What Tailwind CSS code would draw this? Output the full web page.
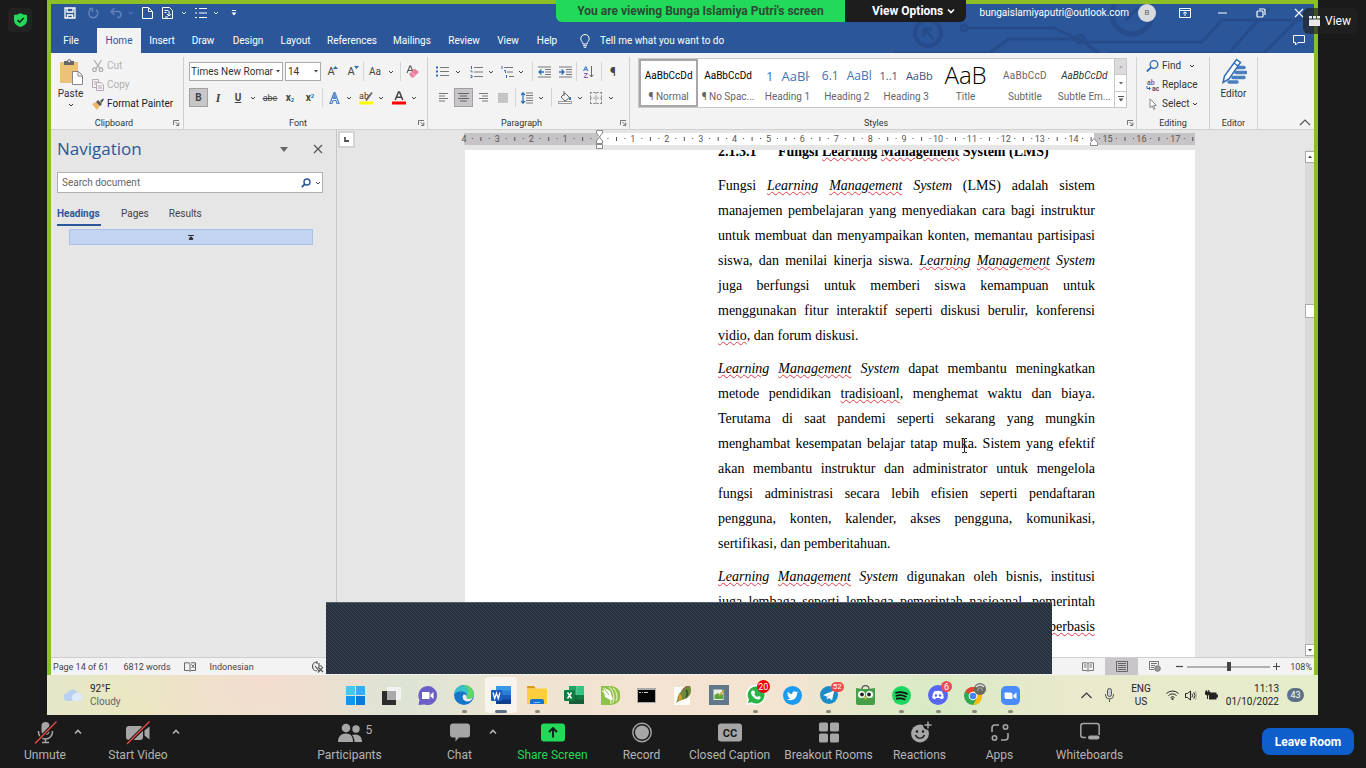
<!DOCTYPE html>
<html lang="en">
<head>
<meta charset="utf-8">
<title>Zoom Meeting</title>
<script src="https://cdn.jsdelivr.net/npm/@tailwindcss/browser@4"></script>
</head>
<body class="flex h-screen flex-col overflow-hidden bg-[#1a1a1a] font-['Roboto',sans-serif] text-[10px] leading-3 text-[#444]">

<svg class="hidden">
  <symbol id="chev" viewBox="0 0 6 6"><path d="M1 2l2 2 2-2" fill="none" stroke="currentColor" stroke-width="1"/></symbol>
  <symbol id="tri" viewBox="0 0 6 6"><path d="M1 2h4L3 4.500z" fill="currentColor"/></symbol>
  <symbol id="up" viewBox="0 0 8 8"><path d="M1 5.500l3-3 3 3" fill="none" stroke="currentColor" stroke-width="1.600"/></symbol>
  <symbol id="launch" viewBox="0 0 7 6"><path d="M.5 5V.5H6M2.500 2l3 3M5.800 2.500v3H3" fill="none" stroke="#666" stroke-width=".9"/></symbol>
</svg>

<!-- shared screen with gutters -->
<div class="relative flex min-h-0 flex-1">
  <div class="w-[47px] shrink-0 pt-2 pl-2">
    <button aria-label="Encryption" class="flex size-6 items-center justify-center rounded bg-[#222]">
      <svg class="h-[14px] w-[13px]" viewBox="0 0 13 14"><path d="M6.500 0C8 1.300 10.500 2 13 2v5c0 3.500-3 6-6.500 7C3 13 0 10.500 0 7V2c2.500 0 5-.7 6.500-2z" fill="#23d959"/><path d="M3.500 7l2.200 2.200L9.700 5" fill="none" stroke="#1a1a1a" stroke-width="1.600"/></svg>
    </button>
  </div>

  <main class="relative flex min-w-0 flex-1 flex-col">
    <!-- Word window -->
    <div class="flex min-h-0 flex-1 flex-col border-x-4 border-t-4 border-[#8cbf26] bg-[#e6e6e6]">
      <header class="relative shrink-0 bg-[#2b579a] text-white">
        <svg class="absolute top-0 right-0 h-[49px] w-[420px]" viewBox="0 0 420 49" fill="none" stroke="#264c8b" stroke-width="3"><circle cx="34" cy="29" r="13" stroke-width="4"/><path d="M40 35l-10-10m0 8v-8h8M0 49h95l20-14h70l20 14M70 24h90l30 14M73 24a3 3 0 1 0-6 0 3 3 0 0 0 6 0M190 38h118l20-22h92M215 49h120l40-45M260 49h110l45-45"/><circle cx="238" cy="10" r="20" stroke-width="5"/><circle cx="186" cy="35" r="4"/><path d="M232 16l12-12"/></svg>
        <div class="relative flex h-[24px] items-center justify-between pr-[10px] pb-[6px] pl-[13px]">
          <div class="flex items-center">
            <button aria-label="Save" class="w-[14px]"><svg class="size-3" viewBox="0 0 12 12" fill="none" stroke="#fff"><path d="M1 1h10v10H1zM3 1v4h6V1M3.500 11V8h5v3" stroke-width="1.300"/></svg></button>
            <button aria-label="Redo" class="ml-[9px] w-[13px]"><svg class="size-3" viewBox="0 0 12 12" fill="none" stroke="#5f82bc" stroke-width="1.500"><path d="M4 2.300A4.500 4.500 0 1 0 9 2.600M2 1.500h3.500V5"/></svg></button>
            <button aria-label="Undo" class="ml-[10px] w-[13px]"><svg class="size-3" viewBox="0 0 12 12" fill="none" stroke="#5f82bc" stroke-width="1.500"><path d="M1 4.500h7a3 3 0 0 1 0 6H7M4.500 1L1 4.500 4.500 8"/></svg></button>
            <svg class="ml-[5px] size-[6px] text-[#5f82bc]"><use href="#chev"/></svg>
            <button aria-label="New" class="ml-[8px] w-[13px]"><svg class="h-3 w-[11px]" viewBox="0 0 11 12" fill="none" stroke="#fff"><path d="M.5.5h6l4 4v7H.5zM6.500.5v4h4"/></svg></button>
            <button aria-label="Document" class="ml-[7px] w-[13px]"><svg class="h-3 w-[12px]" viewBox="0 0 12 12" fill="none" stroke="#fff"><path d="M.5.5h7l3 3v8H.5zM2.500 3.500h4M2.500 5.500h2M7 4v5M5 7l2 2 2-2M3 10h3"/></svg></button>
            <svg class="ml-[6px] size-[6px]"><use href="#chev"/></svg>
            <button aria-label="List" class="ml-[8px] w-[14px]"><svg class="size-3" viewBox="0 0 12 12" stroke="#fff"><path d="M0 1.500h2M0 6h2M0 10.500h2M4 1.500h8M4 6h8M4 10.500h8"/></svg></button>
            <svg class="ml-[4px] size-[6px]"><use href="#chev"/></svg>
            <svg class="ml-[12px] size-[6px]" viewBox="0 0 6 6"><path d="M1 .5h4" stroke="#fff"/><path d="M.5 2.500h5L3 5.500z" fill="#fff"/></svg>
          </div>
          <div class="flex items-center">
            <span>bungaislamiyaputri@outlook.com</span>
            <span class="ml-[9px] flex size-[18px] items-center justify-center rounded-full bg-[#d9dbe0] text-[8px] text-[#666]">B</span>
            <button aria-label="Ribbon display options" class="ml-[23px]"><svg class="h-[10px] w-3" viewBox="0 0 12 10" fill="none" stroke="#fff"><path d="M.5.5h11v9H.5zM.5 2.500h11M6 8V4M4 5.700L6 3.800l2 1.900"/></svg></button>
            <button aria-label="Minimize" class="ml-[27px]"><svg class="h-[10px] w-[9px]" viewBox="0 0 9 10"><path d="M0 5h9" stroke="#fff"/></svg></button>
            <button aria-label="Restore" class="ml-[29px]"><svg class="size-[10px]" viewBox="0 0 10 10" fill="none" stroke="#fff" stroke-width="1.200"><rect x="1" y="3" width="6" height="6" rx="1"/><path d="M3 1h5q1 0 1 1v5"/></svg></button>
            <button aria-label="Close" class="ml-[28px]"><svg class="size-[10px]" viewBox="0 0 10 10"><path d="M1 1l8 8M9 1L1 9" stroke="#fff" stroke-width="1.100"/></svg></button>
          </div>
        </div>
        <nav class="relative flex h-[25px] items-stretch">
          <button class="w-10 pt-px">File</button>
          <button class="ml-[6px] w-11 bg-[#f3f3f3] pt-px text-[#2b579a]">Home</button>
          <button class="w-[42px] pt-px">Insert</button>
          <button class="w-10 pt-px">Draw</button>
          <button class="w-[50px] pt-px">Design</button>
          <button class="w-[45px] pt-px">Layout</button>
          <button class="w-[68px] pt-px">References</button>
          <button class="w-[52px] pt-px">Mailings</button>
          <button class="w-[52px] pt-px">Review</button>
          <button class="w-9 pt-px">View</button>
          <button class="w-[42px] pt-px">Help</button>
          <button class="ml-[12px] flex items-center gap-[10px] pt-px"><svg class="h-[14px] w-[10px]" viewBox="0 0 10 14" fill="none" stroke="#fff"><path d="M3 10C3 8 .8 7.200.8 4.700a4.200 4.200 0 0 1 8.400 0C9.200 7.200 7 8 7 10zM3 11.700h4M3.800 13.300h2.400"/></svg>Tell me what you want to do</button>
          <button aria-label="Comments" class="mr-[9px] ml-auto"><svg class="h-[11px] w-3" viewBox="0 0 12 11" fill="none" stroke="#fff"><path d="M.5.5h11v7H5l-2.500 2.500V7.500h-2z"/></svg></button>
        </nav>
      </header>

      <!-- ribbon -->
      <section class="flex h-[77px] shrink-0 border-b border-[#d0d0d0] bg-[#f3f3f3] pt-1">
        <div class="flex w-[133px] flex-col border-r border-[#cfcfcf]">
          <div class="flex flex-1">
            <button class="flex w-[39px] flex-col items-center pt-[2px] text-[#333]"><svg class="h-[26px] w-6" viewBox="0 0 24 26"><path d="M1 3h18v21H1z" fill="#ecc278"/><path d="M5 2h3a2.300 2.300 0 0 1 4.500 0H15v4H5z" fill="#666"/><circle cx="10.200" cy="2.300" r="1" fill="#f3f3f3"/><path d="M13.500 12.500h6l4 4v9h-10zM19 12.500v4.500h4.500" fill="#fff" stroke="#888"/></svg><span class="mt-[3px]">Paste</span><svg class="mt-[2px] size-[6px]"><use href="#chev"/></svg></button>
            <div class="-mt-px flex flex-col pl-[2px]">
              <button class="flex h-[19px] items-center gap-[3px] text-[#b0b0b0]"><svg class="size-3" viewBox="0 0 12 12" fill="none" stroke="#aaa" stroke-width="1.200"><path d="M2 0l6 8.500M9.500 0L4 8.500"/><circle cx="2.500" cy="9.700" r="1.800"/><circle cx="9" cy="9.700" r="1.800"/></svg>Cut</button>
              <button class="flex h-[19px] items-center gap-[3px] text-[#b0b0b0]"><svg class="size-3" viewBox="0 0 12 12" fill="#f3f3f3" stroke="#b5a9b5"><path d="M.5.5h6v8h-6zM2 3h3M2 5h3"/><path d="M4.500 3.500H9l2.500 2.500v5.500h-7zM6 7h4M6 9h4"/></svg>Copy</button>
              <button class="flex h-[19px] items-center gap-[3px] text-[#222]"><svg class="size-3" viewBox="0 0 12 12"><path d="M0 6l4-2 4 4-3 4z" fill="#ecb56a"/><path d="M4 4l2-2 4 4-2 2z" fill="#555"/><path d="M8 3l3-2.500 1 1L9.500 5z" fill="#555"/></svg>Format Painter</button>
            </div>
          </div>
          <div class="flex h-3 items-center pr-[3px] text-[9px] text-[#333]"><span class="flex-1 pl-[4px] text-center">Clipboard</span><svg class="h-[6px] w-[7px]"><use href="#launch"/></svg></div>
        </div>

        <div class="flex w-[244px] flex-col border-r border-[#cfcfcf]">
          <div class="flex flex-1 flex-col gap-[7px] pt-[5px] pl-[5px]">
            <div class="flex h-[19px] items-center">
              <div class="relative h-[19px] w-[94px]"><select aria-label="Font" class="h-full w-full appearance-none border border-[#ababab] bg-white pl-[1px] text-[10px] text-[#333]"><option>Times New Romar</option></select><svg class="absolute top-[6px] right-[2px] size-[6px]"><use href="#tri"/></svg></div>
              <div class="relative ml-[2px] h-[19px] w-[36px]"><select aria-label="Font size" class="h-full w-full appearance-none border border-[#ababab] bg-white pl-[2px] text-[10px] text-[#333]"><option>14</option></select><svg class="absolute top-[6px] right-[2px] size-[6px]"><use href="#tri"/></svg></div>
              <button class="relative w-5 text-[11px]">A<svg class="absolute top-0 right-[3px] h-[3px] w-[5px]" viewBox="0 0 5 3"><path d="M0 3l2.500-3L5 3z" fill="#2b6cb5"/></svg></button>
              <button class="relative w-5 text-[11px]">A<svg class="absolute top-0 right-[2px] h-[3px] w-[5px]" viewBox="0 0 5 3"><path d="M0 0l2.500 3L5 0z" fill="#2b6cb5"/></svg></button>
              <i class="ml-[2px] h-full w-px bg-[#d5d5d5]"></i>
              <button class="ml-[5px] flex w-[25px] items-center justify-between">Aa<svg class="size-[6px]"><use href="#chev"/></svg></button>
              <i class="ml-[6px] h-full w-px bg-[#d5d5d5]"></i>
              <button aria-label="Clear formatting" class="ml-[5px]"><svg class="h-[13px] w-[14px]" viewBox="0 0 14 13"><path d="M1 8L3.800 1h.8L7 7M2 5.500h4" fill="none" stroke="#555" stroke-width="1.100"/><path d="M3 9l5.500-5.500L13 7l-5.500 5.500H5.500z" fill="#e8809a"/><path d="M5 7.200l4.500 3.800" stroke="#fbe" stroke-width=".8"/></svg></button>
            </div>
            <div class="flex h-[19px] items-center">
              <button class="size-[19px] border border-[#a0a0a0] bg-[#c8c6c8] font-bold">B</button>
              <button class="w-5 font-['Liberation_Serif',serif] text-[12px] font-bold italic">I</button>
              <button class="w-5 font-bold underline">U</button>
              <svg class="mx-[2px] size-[6px]"><use href="#chev"/></svg>
              <button class="w-6 text-[9px] line-through">abc</button>
              <button class="w-4 font-bold">x<sub class="text-[6px] text-[#2b6cb5]">2</sub></button>
              <button class="w-6 font-bold">x<sup class="text-[6px] text-[#2b6cb5]">2</sup></button>
              <i class="h-full w-px bg-[#d5d5d5]"></i>
              <button aria-label="Text effects" class="flex w-[22px] justify-center"><svg class="h-3 w-[11px]" viewBox="0 0 11 12"><path d="M1 11.500L5 .7h1l4 10.800H8L7 8.500H4L3 11.500zM4.500 6.500h2L5.500 3.500z" fill="#fff" stroke="#4f86c8" stroke-width="1.200"/></svg></button>
              <svg class="mx-px size-[6px]"><use href="#chev"/></svg>
              <button aria-label="Highlight" class="ml-[2px] flex w-[22px] justify-center"><svg class="h-[14px] w-[14px]" viewBox="0 0 14 14"><text x="0" y="8" font-size="9" font-family="Roboto" fill="#444">ab</text><path d="M13 1.500L7 9.500" stroke="#666" stroke-width="1.800"/><path d="M0 10.500h14v3H0z" fill="#ff0"/></svg></button>
              <svg class="mx-px size-[6px]"><use href="#chev"/></svg>
              <button aria-label="Font color" class="ml-[3px] flex w-[22px] justify-center"><svg class="h-[14px] w-[14px]" viewBox="0 0 14 14"><path d="M3.200 9L6.500 1h1L10.800 9M4.500 6.200h5" fill="none" stroke="#444" stroke-width="1.500"/><path d="M0 10.500h14v3H0z" fill="red"/></svg></button>
              <svg class="mx-px size-[6px]"><use href="#chev"/></svg>
            </div>
          </div>
          <div class="flex h-3 items-center pr-[2px] text-[9px] text-[#333]"><span class="flex-1 pr-[6px] text-center">Font</span><svg class="h-[6px] w-[7px]"><use href="#launch"/></svg></div>
        </div>

        <div class="flex w-[202px] flex-col border-r border-[#cfcfcf]">
          <div class="flex flex-1 flex-col gap-[7px] pt-[5px] pl-2">
            <div class="flex h-[19px] items-center">
              <button aria-label="Bullets" class="w-[15px]"><svg class="h-[11px] w-[13px]" viewBox="0 0 13 11"><path d="M0 1.500h2M0 5.500h2M0 9.500h2" stroke="#2b6cb5" stroke-width="2"/><path d="M4 1.500h9M4 5.500h9M4 9.500h9" stroke="#777"/></svg></button>
              <svg class="mr-[5px] ml-[4px] size-[6px]"><use href="#chev"/></svg>
              <button aria-label="Numbering" class="flex w-5 justify-center"><svg class="h-3 w-[13px]" viewBox="0 0 13 12"><path d="M1.500 0v3M.5 5h1.500v1.500M.5 9.500H2v2H.5" fill="none" stroke="#2b6cb5"/><path d="M4 1.500h9M4 6h9M4 10.500h9" stroke="#777"/></svg></button>
              <svg class="mx-[2px] size-[6px]"><use href="#chev"/></svg>
              <button aria-label="Multilevel list" class="flex w-[22px] justify-center"><svg class="h-3 w-[13px]" viewBox="0 0 13 12"><path d="M1 0v3M3 4.500h1.500V7M5.500 9v3" fill="none" stroke="#2b6cb5"/><path d="M3 1.500h9M6 6h6M8 10.500h5" stroke="#777"/></svg></button>
              <svg class="size-[6px]"><use href="#chev"/></svg>
              <i class="ml-[8px] h-full w-px bg-[#d5d5d5]"></i>
              <button aria-label="Decrease indent" class="flex w-[22px] justify-center"><svg class="h-3 w-[13px]" viewBox="0 0 13 12"><path d="M0 1h13M7 3.500h6M7 6h6M7 8.500h6M0 11h13" stroke="#777"/><path d="M1 6h5M3.500 3.500L1 6l2.500 2.500" fill="none" stroke="#2b6cb5" stroke-width="1.300"/></svg></button>
              <button aria-label="Increase indent" class="flex w-5 justify-center"><svg class="h-3 w-[13px]" viewBox="0 0 13 12"><path d="M0 1h13M7 3.500h6M7 6h6M7 8.500h6M0 11h13" stroke="#777"/><path d="M0 6h5M2.500 3.500L5 6 2.500 8.500" fill="none" stroke="#2b6cb5" stroke-width="1.300"/></svg></button>
              <i class="ml-px h-full w-px bg-[#d5d5d5]"></i>
              <button aria-label="Sort" class="flex w-6 justify-center"><svg class="h-3 w-3" viewBox="0 0 12 12" fill="none"><path d="M.5 5L2.700.5 5 5M1.300 3.700H4" stroke="#2b6cb5"/><path d="M1 7.500h3.500L1 11.500h4" stroke="#8e5bb5"/><path d="M8.500 0v11M6.500 8.800l2 2.200 2-2.200" stroke="#666"/></svg></button>
              <i class="h-full w-px bg-[#d5d5d5]"></i>
              <button class="w-[22px] text-[12px]">¶</button>
            </div>
            <div class="flex h-[19px] items-center">
              <button aria-label="Align left" class="flex w-[15px] justify-center"><svg class="h-[9px] w-[9px]" viewBox="0 0 9 9"><path d="M0 .5h9M0 3h6M0 5.500h9M0 8h6" stroke="#777"/></svg></button>
              <button aria-label="Center" class="ml-[3px] flex size-[19px] items-center justify-center border border-[#a0a0a0] bg-[#c8c6c8]"><svg class="h-[9px] w-[11px]" viewBox="0 0 11 9"><path d="M0 .5h11M2 3h7M0 5.500h11M2 8h7" stroke="#666"/></svg></button>
              <button aria-label="Align right" class="flex w-5 justify-center"><svg class="h-[9px] w-[9px]" viewBox="0 0 9 9"><path d="M0 .5h9M3 3h6M0 5.500h9M3 8h6" stroke="#777"/></svg></button>
              <button aria-label="Justify" class="flex w-5 justify-center"><svg class="h-[10px] w-[10px]" viewBox="0 0 10 10"><path d="M0 0h10v10H0z" fill="#ccc"/><path d="M0 .5h10M0 3h10M0 5.500h10M0 8h10" stroke="#bbb"/></svg></button>
              <i class="ml-[2px] h-full w-px bg-[#d5d5d5]"></i>
              <button aria-label="Line spacing" class="flex w-[22px] justify-center"><svg class="h-3 w-[12px]" viewBox="0 0 12 12"><path d="M5 1h7M5 3.500h7M5 6h7M5 8.500h7M5 11h7" stroke="#777"/><path d="M2 .8v10.400M0 3L2 .8 4 3M0 9l2 2.200L4 9" fill="none" stroke="#2b6cb5" stroke-width="1.200"/></svg></button>
              <svg class="size-[6px]"><use href="#chev"/></svg>
              <i class="ml-[7px] h-full w-px bg-[#d5d5d5]"></i>
              <button aria-label="Shading" class="ml-px flex w-[23px] justify-center"><svg class="h-[13px] w-[14px]" viewBox="0 0 14 13" fill="none"><path d="M7 2l4.500 4.500L7 10 3 6zM6 0v5" stroke="#666"/><path d="M12 6v3" stroke="#2b6cb5" stroke-width="1.800"/><path d="M.5 10.500h13v2H.5z" fill="#fff" stroke="#999"/></svg></button>
              <svg class="mx-px size-[6px]"><use href="#chev"/></svg>
              <button aria-label="Borders" class="ml-px flex w-[22px] justify-center"><svg class="size-[12px]" viewBox="0 0 12 12"><path d="M.5 0v12M11.500 0v12M0 .5h12M0 11.500h12M6 0v12M0 6h12" stroke="#888" stroke-dasharray="2 1.300"/></svg></button>
              <svg class="mx-px size-[6px]"><use href="#chev"/></svg>
            </div>
          </div>
          <div class="flex h-3 items-center pr-[2px] text-[9px] text-[#333]"><span class="flex-1 pr-[5px] text-center">Paragraph</span><svg class="h-[6px] w-[7px]"><use href="#launch"/></svg></div>
        </div>

        <div class="flex min-w-0 flex-1 flex-col border-r border-[#d5d5d5]">
          <div class="flex flex-1 pt-px pr-[9px] pl-2">
            <div class="flex h-[50px] min-w-0 flex-1 border border-[#c8c8c8] bg-white font-['Open_Sans',sans-serif] text-[#666]">
              <div class="grid min-w-0 flex-1 grid-cols-8">
                <button class="flex min-w-0 flex-col items-center justify-between border-2 border-[#a8a6a8] pt-[9px] pb-[2px] whitespace-nowrap font-['Roboto',sans-serif]"><span class="text-black">AaBbCcDd</span><span>¶ Normal</span></button>
                <button class="flex min-w-0 flex-col items-center justify-between pt-[11px] pb-[4px] whitespace-nowrap font-['Roboto',sans-serif]"><span class="text-black">AaBbCcDd</span><span>¶ No Spac...</span></button>
                <button class="flex min-w-0 flex-col items-center justify-between pt-[11px] pb-[4px] whitespace-nowrap"><span class="flex gap-2 text-[13px] text-[#4472b4]"><span>1</span><span>AaBŀ</span></span><span class="font-['Roboto',sans-serif]">Heading 1</span></button>
                <button class="flex min-w-0 flex-col items-center justify-between pt-[11px] pb-[4px] whitespace-nowrap"><span class="flex gap-2 text-[12px] text-[#4472b4]"><span>6.1</span><span>AaBl</span></span><span class="font-['Roboto',sans-serif]">Heading 2</span></button>
                <button class="flex min-w-0 flex-col items-center justify-between pt-[11px] pb-[4px] whitespace-nowrap"><span class="flex gap-2 text-[11px] text-[#3a5480]"><span>1..1</span><span>AaBb</span></span><span class="font-['Roboto',sans-serif]">Heading 3</span></button>
                <button class="flex min-w-0 flex-col items-center justify-between pb-[4px] whitespace-nowrap"><span class="text-[24px] leading-8 font-light text-black">AaB</span><span class="font-['Roboto',sans-serif]">Title</span></button>
                <button class="flex min-w-0 flex-col items-center justify-between pt-[11px] pb-[4px] whitespace-nowrap font-['Roboto',sans-serif]"><span class="tracking-wide">AaBbCcD</span><span>Subtitle</span></button>
                <button class="flex min-w-0 flex-col items-center justify-between pt-[11px] pb-[4px] whitespace-nowrap font-['Roboto',sans-serif]"><span class="text-[#333] italic">AaBbCcDd</span><span>Subtle Em...</span></button>
              </div>
              <div class="flex w-3 shrink-0 flex-col border-l border-[#c8c8c8]">
                <button aria-label="Previous styles" class="flex flex-1 items-center justify-center bg-[#dcdadc] text-[#aaa]"><svg class="size-[6px] rotate-180"><use href="#tri"/></svg></button>
                <button aria-label="Next styles" class="flex flex-1 items-center justify-center border-y border-[#c8c8c8]"><svg class="size-[6px]"><use href="#tri"/></svg></button>
                <button aria-label="More styles" class="flex flex-1 items-center justify-center"><svg class="size-[6px]" viewBox="0 0 6 6"><path d="M0 .5h6" stroke="#555"/><path d="M.5 2.500h5L3 5.500z" fill="#555"/></svg></button>
              </div>
            </div>
          </div>
          <div class="flex h-3 items-center pr-[2px] text-[9px] text-[#333]"><span class="flex-1 pr-[5px] text-center">Styles</span><svg class="h-[6px] w-[7px]"><use href="#launch"/></svg></div>
        </div>

        <div class="flex w-[73px] flex-col border-r border-[#cfcfcf] text-[#333]">
          <div class="-mt-px flex flex-1 flex-col pl-[9px]">
            <button class="flex h-[19px] items-center"><svg class="h-3 w-[13px]" viewBox="0 0 13 12" fill="none" stroke="#2b6cb5"><circle cx="8" cy="4.500" r="3.800" stroke-width="1.300"/><path d="M5.200 7.300L.8 11.500" stroke-width="1.800"/></svg><span class="ml-[3px] w-[19px]">Find</span><svg class="ml-[8px] size-[6px]"><use href="#chev"/></svg></button>
            <button class="flex h-[19px] items-center"><svg class="h-3 w-[13px]" viewBox="0 0 13 12"><text x="1" y="5.500" font-size="7" font-weight="700" font-family="Roboto" fill="#666">a<tspan fill="#8e5bb5">b</tspan></text><text x="6" y="11.500" font-size="7" font-weight="700" font-family="Roboto" fill="#555">ac</text><path d="M1 7v2.500h3M3 8l1.500 1.500L3 11" fill="none" stroke="#2b6cb5"/></svg><span class="ml-[3px]">Replace</span></button>
            <button class="flex h-[19px] items-center"><svg class="h-3 w-[13px]" viewBox="0 0 13 12"><path d="M4 .8v9l2.200-2 1.500 3.500 1.300-.6-1.500-3.300h2.800z" fill="#fff" stroke="#888"/></svg><span class="ml-[3px]">Select</span><svg class="ml-[3px] size-[6px]"><use href="#chev"/></svg></button>
          </div>
          <div class="flex h-3 items-center justify-center text-[9px]">Editing</div>
        </div>
        <div class="flex w-[48px] flex-col items-center border-r border-[#d5d5d5] text-[#333]">
          <button class="flex flex-1 flex-col items-center pt-px"><svg class="h-[26px] w-[26px]" viewBox="0 0 26 26"><path d="M14 9.500h9M15 14.500h10M12 19.500h11M8 24h8" stroke="#4a80c0" stroke-width="3.500" stroke-linecap="round"/><path d="M15.500 1.500l4 3L8 21l-6 3.500L3.500 18z" fill="#fff" stroke="#2f6db8" stroke-width="1.500"/><path d="M13 5l4 3" stroke="#2f6db8" stroke-width="1.500"/></svg><span class="mt-[4px]">Editor</span></button>
          <div class="flex h-3 items-center justify-center text-[9px]">Editor</div>
        </div>
        <div class="flex w-[56px] items-end justify-end pr-[3px] pb-[3px]"><button aria-label="Collapse ribbon"><svg class="h-[7px] w-3" viewBox="0 0 12 7"><path d="M1 6l5-5 5 5" fill="none" stroke="#555" stroke-width="1.200"/></svg></button></div>
      </section>

      <!-- navigation pane and document -->
      <div class="flex min-h-0 flex-1">
        <aside class="w-[286px] shrink-0 border-r border-[#c6c6c6] pl-[6px]">
          <div class="flex h-[38px] items-center pr-[13px]"><h2 class="flex-1 font-['Open_Sans',sans-serif] text-[17px] leading-6 text-[#2b579a]">Navigation</h2><svg class="mr-[25px] h-[5px] w-2" viewBox="0 0 8 5"><path d="M0 0h8L4 5z" fill="#666"/></svg><button aria-label="Close navigation"><svg class="size-[10px]" viewBox="0 0 10 10"><path d="M1 1l8 8M9 1L1 9" stroke="#555" stroke-width="1.200"/></svg></button></div>
          <div class="mt-[4px] mr-[13px] flex h-[21px] items-center border border-[#b0b0b0] bg-white pr-px"><input aria-label="Search document" placeholder="Search document" class="min-w-0 flex-1 pl-[4px] text-[10px] outline-none placeholder:text-[#666]"><svg class="h-[10px] w-[10px]" viewBox="0 0 10 10" fill="none" stroke="#2b579a"><circle cx="6" cy="4" r="3" stroke-width="1.400"/><path d="M4 6L.8 9.200" stroke-width="1.800"/></svg><svg class="ml-[4px] size-[6px]"><use href="#chev"/></svg></div>
          <div class="mt-[11px] flex"><button class="h-[22px] w-11 border-b-2 border-[#2b579a] text-left font-bold text-[#2b579a]">Headings</button><button class="ml-[20px] h-[22px] pb-[2px]">Pages</button><button class="ml-[20px] h-[22px] pb-[2px]">Results</button></div>
          <div class="mt-[3px] mr-[23px] ml-[12px] flex h-[16px] items-center justify-center border border-[#a9c0ea] bg-[#c3d3f2]"><svg class="h-[5px] w-[6px]" viewBox="0 0 6 5"><path d="M0 .5h6M1 4.500h4" stroke="#333"/><path d="M3 1l2.500 3h-5z" fill="#333"/></svg></div>
        </aside>

        <section class="flex min-w-0 flex-1 flex-col">
          <div class="flex h-5 shrink-0 items-start">
            <button aria-label="Tab stop" class="mt-px ml-px flex size-[17px] items-center justify-center border-2 border-[#d4d4d4] bg-white"><svg class="size-[5px]" viewBox="0 0 5 5"><path d="M1 0v4h4" fill="none" stroke="#555" stroke-width="1.800"/></svg></button>
            <svg id="ruler" class="ml-[106px] h-[19px] w-[736px]" viewBox="0 0 736 19" font-family="Roboto" font-size="9" fill="#555" text-anchor="middle"><path d="M3 3h731v12H3z" fill="#c6c4c6"/><path d="M137 3h496v12H137z" fill="#fff"/></svg>
          </div>
          <div class="flex min-h-0 flex-1">
            <article class="ml-[128px] w-[730px] overflow-hidden bg-white pr-[100px] pl-[253px] font-['Liberation_Serif',serif] text-[14px] leading-[25px] text-black">
              <h3 class="-mt-[11px] mb-[9px] flex font-bold"><span class="w-[60px]">2.1.3.1</span><span></span></h3>
              <div id="text"></div>
            </article>
            <div class="ml-auto flex w-[9px] flex-col items-stretch overflow-hidden bg-[#dadada]">
              <button aria-label="Scroll up" class="mt-px flex h-3 items-center justify-center border border-r-0 border-[#aaa] bg-white"><svg class="size-[6px] rotate-180"><use href="#tri"/></svg></button>
              <div class="mt-[141px] h-[14px] border border-r-0 border-[#aaa] bg-white"></div>
              <button aria-label="Scroll down" class="mt-auto mb-px flex h-3 items-center justify-center border border-r-0 border-[#aaa] bg-white"><svg class="size-[6px]"><use href="#tri"/></svg></button>
            </div>
          </div>
        </section>
      </div>

      <footer class="flex h-[18px] shrink-0 items-center border-t border-[#cfcfcf] bg-[#f3f3f3] pl-[2px] text-[9px]">
        <span>Page 14 of 61</span><span class="ml-[15px]">6812 words</span>
        <svg class="ml-[13px] h-[10px] w-3" viewBox="0 0 12 10" fill="none" stroke="#666"><path d="M6 9V1.500L5 .8H.5v7.700H5L6 9.500l1-1h4.500M7 .8h4.500v7.700M7.500 2.500l3 3.500M10.500 2.500l-3 3.500"/></svg>
        <span class="ml-[14px]">Indonesian</span>
        <svg class="ml-[58px] h-3 w-3" viewBox="0 0 12 12" fill="none" stroke="#555"><path d="M5 1a4.500 4.500 0 0 0 0 9M5 0v3M3 5l4 5M6 6l5 5M11 6l-5 5.500M7 2v3h3" stroke-width="1.200"/></svg>
        <div class="ml-auto flex h-full items-center">
          <button aria-label="Read mode" class="mr-[11px]"><svg class="h-[10px] w-3" viewBox="0 0 12 10" fill="none" stroke="#777"><path d="M6 9.500L5 8.500H.5V.8H5l1 .7 1-.7h4.500v7.700H7zM6 1.500v8M2 3h2.500M2 5h2.500M7.500 3H10M7.500 5H10"/></svg></button>
          <button aria-label="Print layout" class="flex h-full w-[33px] items-center justify-center bg-[#c8c6c8]"><svg class="h-[11px] w-3" viewBox="0 0 12 11" fill="none" stroke="#666"><path d="M.5.500h11v10H.5zM2 2.500h8M2 4.500h8M2 6.500h8M2 8.500h8"/></svg></button>
          <button aria-label="Web layout" class="ml-[11px]"><svg class="h-[11px] w-3" viewBox="0 0 12 11" fill="none" stroke="#777"><path d="M5 8.500H.5v-8h9V4M2 2.500h6M2 4.500h4M2 6.500h3"/><circle cx="8.500" cy="7.500" r="2.800" fill="#999"/></svg></button>
          <button aria-label="Zoom out" class="ml-[15px]"><svg class="size-[7px]" viewBox="0 0 7 7"><path d="M0 3.500h7" stroke="#444" stroke-width="1.200"/></svg></button>
          <div class="relative ml-[4px] flex h-[10px] w-[83px] items-center"><input type="range" aria-label="Zoom" value="52" class="absolute inset-0 m-0 w-full opacity-0"><i class="h-[2px] w-full bg-[#b0b0b0]"></i><i class="absolute left-[40px] h-[9px] w-[4px] bg-[#444]"></i></div>
          <button aria-label="Zoom in" class="ml-[3px]"><svg class="size-[7px]" viewBox="0 0 7 7"><path d="M0 3.500h7M3.500 0v7" stroke="#444"/></svg></button>
          <span class="mr-[2px] ml-[10px]">108%</span>
        </div>
      </footer>
    </div>

    <!-- Windows taskbar -->
    <div class="relative flex h-10 shrink-0 items-center bg-linear-to-r from-[#dfe6d2] via-[#f5e3d2] to-[#e4edca] text-[#222]">
      <div class="absolute inset-0 bg-[radial-gradient(circle_at_17%_0%,#f3dccf_0%,transparent_14%),radial-gradient(circle_at_27%_40%,#dbe4d5_0%,transparent_14%),radial-gradient(circle_at_70%_90%,#d6ebc4_0%,transparent_16%),radial-gradient(circle_at_8%_100%,#ebe8c0_0%,transparent_16%)]"></div>
      <div class="relative ml-[16px] flex w-[200px] items-center gap-[7px]"><svg class="h-[14px] w-5" viewBox="0 0 20 14"><path d="M5 13a4 4 0 0 1-.5-8A5.500 5.500 0 0 1 14.800 5 4 4 0 0 1 15.500 13z" fill="#b9d0f0"/><path d="M10 13a5 5 0 0 1 5-8 4 4 0 0 1 .5 8z" fill="#dfeafa"/></svg><div class="leading-[13px]">92°F<br><span class="text-[#666]">Cloudy</span></div></div>
      <div class="absolute inset-y-0 left-[292px] flex w-[688px] items-center justify-between">
        <button aria-label="Start" class="flex h-9 w-8 items-center justify-center"><svg class="size-[19px]" viewBox="0 0 19 19"><path d="M0 0h9v9H0z" fill="#4cc3f5"/><path d="M10 0h9v9h-9z" fill="#35aef0"/><path d="M0 10h9v9H0z" fill="#1a94e6"/><path d="M10 10h9v9h-9z" fill="#0a7bd8"/></svg></button>
        <button aria-label="Task view" class="flex h-9 w-8 items-center justify-center"><svg class="size-[19px]" viewBox="0 0 19 19"><path d="M0 5h14v14H0z" fill="#2c2c2c"/><path d="M5 1h14v13H5z" fill="#f2f2f2"/><path d="M5 5h9v9H5z" fill="#aaa"/></svg></button>
        <button aria-label="Chat" class="flex h-9 w-8 items-center justify-center"><svg class="size-[19px]" viewBox="0 0 19 19"><path d="M9.500 0a9.500 9.500 0 1 1-3 18.500L.5 19l1-5A9.500 9.500 0 0 1 9.500 0z" fill="#6b5ec6"/><path d="M4 6h7.500v7H4zM12.500 8.500L15.500 6v7l-3-2.500z" fill="#fff"/></svg></button>
        <button aria-label="Edge" class="relative flex h-9 w-8 items-center justify-center"><svg class="size-5" viewBox="0 0 20 20"><circle cx="10" cy="10" r="10" fill="#1575c8"/><path d="M.3 8A10 10 0 0 1 20 9c0 3-2 5-5 5-2 0-3-1-2.500-2 1-2 0-5-4-5.500S1 7 .3 10z" fill="#38c1c9"/><path d="M9 0a10 10 0 0 1 11 9c0 3-2 5-5 5-2 0-3-1-2.500-2C14 9 16 3 9 0z" fill="#5fd668"/><path d="M12.500 12c-.5 1 .5 2 2.500 2 1.500 0 3-.5 4-2-1 3-3 4.500-5.500 4.500-4 0-6-4-4-7 2-.5 3.500 1 3 2.500z" fill="#eef"/></svg><i class="absolute bottom-0 h-[3px] w-[5px] rounded bg-[#8a8878]"></i></button>
        <button aria-label="Word" class="relative flex h-9 w-8 items-center justify-center rounded bg-white/60"><svg class="h-[18px] w-5" viewBox="0 0 20 18"><path d="M5 0h15v9H5z" fill="#3b97e8"/><path d="M5 4.500h15V9H5z" fill="#2b7cd3"/><path d="M5 9h15v9H5z" fill="#185abd"/><path d="M5 13.500h15V18H5z" fill="#103f91"/><rect y="4" width="11" height="11" rx="1" fill="#1b5cbe"/><path d="M2 6.500l1.700 6L5.500 7l1.800 5.500L9 6.500" fill="none" stroke="#fff" stroke-width="1.300"/></svg><i class="absolute bottom-0 h-[3px] w-3 rounded bg-[#5f7187]"></i></button>
        <button aria-label="Explorer" class="relative flex h-9 w-8 items-center justify-center"><svg class="h-[18px] w-5" viewBox="0 0 20 18"><path d="M0 1q0-1 1-1h6l2 2.500H0z" fill="#d99a1c"/><path d="M0 2.500h19q1 0 1 1V18H0z" fill="#ffce3d"/><path d="M3 18v-3q0-2 2-2h10q2 0 2 2v3z" fill="#1377cb"/><path d="M7 16.500h6" stroke="#6fc0f5"/></svg><i class="absolute bottom-0 h-[3px] w-[5px] rounded bg-[#8a8878]"></i></button>
        <button aria-label="Excel" class="flex h-9 w-8 items-center justify-center"><svg class="h-[18px] w-5" viewBox="0 0 20 18"><path d="M5 0h7.500v9H5z" fill="#21a366"/><path d="M12.500 0H20v9h-7.500z" fill="#33c481"/><path d="M5 9h15v9H5z" fill="#185c37"/><path d="M12.500 9H20v4.500h-7.500z" fill="#107c41"/><rect y="4" width="11" height="11" rx="1" fill="#107c41"/><path d="M3.500 6.500l4 6M7.500 6.500l-4 6" stroke="#fff" stroke-width="1.400"/></svg></button>
        <button aria-label="CorelDRAW" class="flex h-9 w-8 items-center justify-center"><svg class="size-[19px]" viewBox="0 0 19 19"><path d="M0 0h10a9.500 9.500 0 0 1 0 19H0z" fill="#8fc04a"/><path d="M1 5c6 2 9 7 9 13M12 2c4 3 5 9 3 13M8 1c5 4 6 11 4 16" fill="none" stroke="#d5e8a8" stroke-width="1.500"/><path d="M2 1l7 4 3 8-1.500 1.500L4 11z" fill="#fff"/><path d="M2 1l6 8" stroke="#8fc04a"/></svg></button>
        <button aria-label="Terminal" class="flex h-9 w-8 items-center justify-center"><svg class="h-[15px] w-[19px]" viewBox="0 0 19 15"><path d="M0 0h19v15H0z" fill="#aaa"/><path d="M1 2h17v12H1z" fill="#050505"/><path d="M2 4.500h2M5 4.500h1M7 4.500h4" stroke="#ccc"/></svg></button>
        <button aria-label="Notepad++" class="flex h-9 w-8 items-center justify-center"><svg class="size-[19px]" viewBox="0 0 19 19"><path d="M1 1h16v18H1z" fill="#fcfcfa"/><path d="M3 17C5 14 4 11 6 8 9 4 12 1 17 0c2 4 1 9-3 12-3 2-6 1-11 5z" fill="#6f8a3a"/><path d="M9 5c2-3 5-5 8-5" fill="none" stroke="#8a6a3a" stroke-width="1.500"/><path d="M6 9c2 1 2 3 0 5" fill="none" stroke="#e39a2a" stroke-width="2.800"/><path d="M13 4c2 2 2 4 0 7" fill="none" stroke="#2f5a3a" stroke-width="1.800"/></svg></button>
        <button aria-label="Notepad" class="flex h-9 w-8 items-center justify-center"><svg class="h-5 w-5" viewBox="0 0 20 20"><path d="M0 0h20v20H0z" fill="#607889"/><path d="M4.500 4.500h8l2 2V15h-10z" fill="#e8f0e0"/><path d="M5.500 10l3.500-2 2 2 3-1v5H5.500z" fill="#5aa53c"/><path d="M10 11l5-6" stroke="#c9a233" stroke-width="1.500"/></svg></button>
        <button aria-label="WhatsApp" class="relative flex h-9 w-8 items-center justify-center"><svg class="size-5" viewBox="0 0 20 20"><path d="M10 0a10 10 0 1 1-4.500 19L0 20l1.200-5.300A10 10 0 0 1 10 0z" fill="#fff"/><path d="M10 1.500a8.500 8.500 0 1 1-4.300 15.800L2 18l.9-3.600A8.500 8.500 0 0 1 10 1.500z" fill="#28b446"/><path d="M6.500 5.500l1.800.2.800 2-.9 1.200c.8 1.500 1.800 2.300 3.200 3l1.200-1 2 1c.2 1.700-1 2.600-2.500 2.600-3.500-.2-7-4-7-6.700 0-1 .5-2 1.400-2.300z" fill="#fff"/></svg><span class="absolute top-[3px] right-[2px] flex size-[13px] items-center justify-center rounded-full bg-red-600 text-[9px] text-white">20</span><i class="absolute bottom-0 h-[3px] w-[5px] rounded bg-[#8a8878]"></i></button>
        <button aria-label="Twitter" class="flex h-9 w-8 items-center justify-center"><svg class="size-[19px]" viewBox="0 0 24 24"><circle cx="12" cy="12" r="12" fill="#1d9bf0"/><path d="M19 8c-.5.200-1 .4-1.600.4.600-.3 1-.9 1.200-1.500-.5.300-1.200.6-1.800.7a2.900 2.900 0 0 0-5 2.600c-2.300-.1-4.400-1.200-5.800-3-.8 1.300-.4 3 .9 3.800-.5 0-.9-.1-1.300-.3 0 1.400 1 2.500 2.300 2.800-.4.100-.8.100-1.300 0 .4 1.100 1.400 2 2.700 2A5.700 5.700 0 0 1 5 16.700a8 8 0 0 0 4.400 1.300c5.400 0 8.400-4.500 8.200-8.500.6-.4 1-.9 1.400-1.500z" fill="#fff"/></svg></button>
        <button aria-label="Telegram" class="relative flex h-9 w-8 items-center justify-center"><svg class="size-[18px]" viewBox="0 0 24 24"><circle cx="12" cy="12" r="12" fill="#1c8cc8"/><path d="M4 12l15-6-3 13-4-3-2.500 2-.5-4z" fill="#fff"/><path d="M9 14l7-5-5.500 6-1 3z" fill="#b8d5e6"/></svg><span class="absolute top-[5px] right-[1px] flex h-[10px] w-[13px] items-center justify-center rounded-full bg-[#ee4b4b] text-[8px] text-white">52</span><i class="absolute bottom-0 h-[3px] w-[5px] rounded bg-[#8a8878]"></i></button>
        <button aria-label="Tokopedia" class="flex h-9 w-8 items-center justify-center"><svg class="h-5 w-[19px]" viewBox="0 0 19 20"><path d="M6 4a3.500 3.500 0 0 1 7 0" fill="none" stroke="#555" stroke-width="1.300"/><path d="M0 3l7 1h5l7-1v15q0 2-2 2H2q-2 0-2-2z" fill="#45a049"/><circle cx="5.500" cy="9.500" r="3.600" fill="#fff"/><circle cx="13.500" cy="9.500" r="3.600" fill="#fff"/><circle cx="6" cy="9.500" r="1.900" fill="#222"/><circle cx="13" cy="9.500" r="1.900" fill="#222"/><path d="M8 12h3l-1.500 3z" fill="#f5b93a"/></svg></button>
        <button aria-label="Spotify" class="relative flex h-9 w-8 items-center justify-center"><svg class="size-[19px]" viewBox="0 0 24 24"><circle cx="12" cy="12" r="12" fill="#1ed760"/><path d="M5 8.500c5-1.500 10-1 14 1.300M5.500 12.300c4.500-1.200 8.500-.8 12 1.200M6 16c4-1 7-.6 10 1" fill="none" stroke="#111" stroke-width="2.200" stroke-linecap="round"/></svg><i class="absolute bottom-0 h-[3px] w-[5px] rounded bg-[#8a8878]"></i></button>
        <button aria-label="Discord" class="relative flex h-9 w-8 items-center justify-center"><svg class="size-5" viewBox="0 0 24 24"><circle cx="12" cy="12" r="12" fill="#5865f2"/><path d="M7.500 7.500Q12 6 16.500 7.500 19 11 19 15.500 17 17 15.300 17l-.8-1.300h-5L8.700 17Q7 17 5 15.500 5 11 7.500 7.500z" fill="#fff"/><circle cx="9.500" cy="12.500" r="1.500" fill="#5865f2"/><circle cx="14.500" cy="12.500" r="1.500" fill="#5865f2"/></svg><span class="absolute top-[4px] right-[2px] flex size-[11px] items-center justify-center rounded-full bg-[#ed4c55] text-[9px] text-white">6</span><i class="absolute bottom-0 h-[3px] w-[5px] rounded bg-[#8a8878]"></i></button>
        <button aria-label="Chrome" class="relative flex h-9 w-8 items-center justify-center"><svg class="size-[24px]" viewBox="0 0 24 24"><circle cx="11" cy="13" r="9" fill="#33a852"/><path d="M11 13L3.200 8.500A9 9 0 0 1 18.800 8.500H11z" fill="#ea4335"/><path d="M11 13V8.500h7.800A9 9 0 0 1 11 22l4-7z" fill="#fbbc05"/><circle cx="11" cy="13" r="4.300" fill="#fff"/><circle cx="11" cy="13" r="3.300" fill="#4285f4"/><circle cx="18" cy="6" r="6" fill="#6a6a66"/><path d="M14 4q4-4 8 0" fill="none" stroke="#ddd" stroke-width="1.500"/><path d="M15.500 8l1-3h3l1 3" fill="none" stroke="#aaa"/></svg><i class="absolute bottom-0 h-[3px] w-[5px] rounded bg-[#8a8878]"></i></button>
        <button aria-label="Zoom" class="relative flex h-9 w-8 items-center justify-center"><svg class="size-[19px]" viewBox="0 0 19 19"><rect width="19" height="19" rx="5" fill="#4a8cff"/><path d="M3.500 6.500h6q2 0 2 2V13h-6q-2 0-2-2zM12.500 9l3-2.500V13l-3-2z" fill="#fff"/></svg><i class="absolute bottom-0 h-[3px] w-[5px] rounded bg-[#8a8878]"></i></button>
      </div>
      <div class="relative mr-[14px] ml-auto flex items-center">
        <svg class="h-[7px] w-[11px]" viewBox="0 0 11 7"><path d="M.5 6l5-5 5 5" fill="none" stroke="#333" stroke-width="1.100"/></svg>
        <svg class="ml-[13px] h-[14px] w-[9px]" viewBox="0 0 9 14" fill="none" stroke="#555"><rect x="2.500" y=".5" width="4" height="8" rx="2" fill="#c5ccd4"/><path d="M.5 6v1a4 4 0 0 0 8 0V6M4.500 11v3"/></svg>
        <span class="ml-[17px] text-center leading-[13px]">ENG<br>US</span>
        <svg class="ml-[15px] h-[10px] w-[13px]" viewBox="0 0 13 10" fill="none" stroke="#222"><path d="M.5 3.500a8.500 8.500 0 0 1 12 0M2.500 5.500a5.800 5.800 0 0 1 8 0M4.500 7.500a3 3 0 0 1 4 0"/><circle cx="6.500" cy="9" r=".7" fill="#222"/></svg>
        <svg class="ml-[6px] h-[11px] w-3" viewBox="0 0 12 11" fill="none" stroke="#222"><path d="M.5 3.500h2L5.500 1v9l-3-2.500h-2zM7 3.800q1.200 1.700 0 3.400M8.800 2.300q2.400 3.200 0 6.400"/><path d="M10.500 1q2 4.500 0 9" stroke="#aaa"/></svg>
        <svg class="ml-[8px] h-[10px] w-[13px]" viewBox="0 0 13 10"><path d="M4 2.500h7.500v2h1.500v3h-1.500v2H4z" fill="#222"/><path d="M0 2h5v1.500q-.5 1.500-2.500 1.500T0 3.500zM2.500 5v4M1.300 0v2M3.700 0v2" fill="#222" stroke="#222"/></svg>
        <span class="ml-[8px] text-right leading-[13px]">11:13<br>01/10/2022</span>
        <span class="ml-[8px] flex h-[14px] w-[17px] items-center justify-center rounded-full bg-[#5d7285] text-[9px] text-white">43</span>
      </div>
    </div>

    <!-- text cursor over the document -->
    <svg class="absolute top-[438px] left-[914px] h-[15px] w-[7px]" viewBox="0 0 7 15" fill="none" stroke="#222"><path d="M1 .5h2l.5.500.5-.5h2M3.500 1v13M1 14.500h2l.5-.5.5.5h2"/></svg>
    <!-- covered window -->
    <svg class="absolute bottom-[41px] left-[279px] h-[72px] w-[726px] border-t border-[#555f6b] bg-[#27303d]"><defs><pattern id="hatch" width="4" height="4" patternUnits="userSpaceOnUse"><path d="M-1 -1l6 6M-1 3l2 2M3 -1l2 2" stroke="#414e5c" stroke-width=".8"/></pattern></defs><rect width="100%" height="100%" fill="url(#hatch)"/></svg>
  </main>

  <div class="w-[48px] shrink-0"></div>

  <!-- overlays of the meeting client -->
  <div class="absolute top-0 left-[556px] flex h-[22px] items-stretch overflow-hidden rounded-b-md text-[12px] font-bold">
    <div class="flex w-[289px] items-center justify-center bg-[#23d959] text-[#2d4a36]">You are viewing Bunga Islamiya Putri's screen</div>
    <button class="flex w-[121px] items-center gap-[4px] bg-[#1d1d1d] pl-[27px] text-white">View Options<svg class="size-2 rotate-180"><use href="#up"/></svg></button>
  </div>
  <button class="absolute top-2 right-2 flex h-[26px] w-[55px] items-center gap-[5px] rounded-md bg-[#222]/70 pl-[6px] text-[12px] text-white"><svg class="h-[10px] w-[11px]" viewBox="0 0 11 10" fill="#e8e8e8"><path d="M0 0h3v2.500H0zM4 0h3v2.500H4zM8 0h3v2.500H8zM0 3.500h11V10H0z"/></svg>View</button>
</div>

<!-- meeting toolbar -->
<div class="flex h-[53px] shrink-0 justify-between whitespace-nowrap text-[12px] leading-4 text-[#b4b4b4]">
  <div class="flex pl-5">
    <button class="flex w-[50px] flex-col items-center pt-[6px]"><svg class="h-[24px] w-[24px]" viewBox="0 0 24 24"><rect x="8.500" y="1" width="8" height="13" rx="4" fill="#a6a6a6"/><path d="M5.500 10v1a7 7 0 0 0 14 0v-1M12.500 18v3.500M9 21.500h7" fill="none" stroke="#a6a6a6" stroke-width="1.500"/><path d="M2 22.500L23 1" stroke="#1a1a1a" stroke-width="3.500"/><path d="M2 22.500L23.500 .5" stroke="#f04848" stroke-width="1.300"/></svg><span class="mt-[2px]">Unmute</span></button>
    <button aria-label="Audio options" class="ml-[2px] flex w-3 justify-center pt-[13px]"><svg class="size-2"><use href="#up"/></svg></button>
    <button class="ml-[22px] flex w-[64px] flex-col items-center pt-[6px]"><svg class="h-[24px] w-[26px]" viewBox="0 0 26 24"><rect x="1" y="5" width="17" height="14" rx="3" fill="#a6a6a6"/><path d="M19.500 9.500l5-4v13l-5-4z" fill="#a6a6a6"/><path d="M2 23L24 1.500" stroke="#1a1a1a" stroke-width="3.500"/><path d="M2 23L24.500 .5" stroke="#f04848" stroke-width="1.300"/></svg><span class="mt-[2px]">Start Video</span></button>
    <button aria-label="Video options" class="flex w-3 justify-center pt-[13px]"><svg class="size-2"><use href="#up"/></svg></button>
  </div>
  <div class="flex pr-[2px]">
    <button class="relative flex w-[68px] flex-col items-center pt-[6px]"><svg class="h-[24px] w-[24px]" viewBox="0 0 24 24" fill="#a6a6a6"><circle cx="8" cy="7" r="4.300"/><path d="M0 21c0-5.500 3-8.500 8-8.500s7 3 7 8.500z"/><circle cx="18" cy="8" r="3.700"/><path d="M16.500 21c0-3.500-1-5.500-2.500-7 6-2 10 1 10 7z"/></svg><span class="absolute top-[7px] left-[50px]">5</span><span class="mt-[2px]">Participants</span></button>
    <button class="ml-[49px] flex w-[54px] flex-col items-center pt-[6px]"><svg class="h-[24px] w-5" viewBox="0 0 20 24"><path d="M3 2.500h14q3 0 3 3v8q0 3-3 3H9l-3.500 4v-4H3q-3 0-3-3v-8q0-3 3-3z" fill="#a6a6a6"/></svg><span class="mt-[2px]">Chat</span></button>
    <button aria-label="Chat options" class="flex w-3 justify-center pt-[13px]"><svg class="size-2"><use href="#up"/></svg></button>
    <button class="ml-[16px] flex w-[76px] flex-col items-center pt-[6px] text-[#23d959]"><svg class="h-[24px] w-6" viewBox="0 0 24 24"><rect y="2.500" width="24" height="18" rx="3" fill="#23d959"/><path d="M12 16.500V7M8 11l4-4 4 4" fill="none" stroke="#1a1a1a" stroke-width="1.900"/></svg><span class="mt-[2px]">Share Screen</span></button>
    <button class="ml-[23px] flex w-14 flex-col items-center pt-[6px]"><svg class="h-[24px] w-5" viewBox="0 0 20 24"><circle cx="10" cy="11.500" r="9.200" fill="none" stroke="#a6a6a6" stroke-width="1.400"/><circle cx="10" cy="11.500" r="7" fill="#a6a6a6"/></svg><span class="mt-[2px]">Record</span></button>
    <button class="ml-[20px] flex w-20 flex-col items-center pt-[6px]"><svg class="h-[24px] w-6" viewBox="0 0 24 24"><rect y="2.500" width="24" height="18" rx="3" fill="#a6a6a6"/><text x="12" y="15.500" text-anchor="middle" font-size="11" font-weight="700" font-family="Roboto" fill="#1a1a1a">CC</text></svg><span class="mt-[2px]">Closed Caption</span></button>
    <button class="ml-[13px] flex w-[92px] flex-col items-center pt-[6px]"><svg class="h-[24px] w-5" viewBox="0 0 20 24" fill="#a6a6a6"><rect y="1.500" width="9" height="9" rx="1.500"/><rect x="11" y="1.500" width="9" height="9" rx="1.500"/><rect y="12.500" width="9" height="9" rx="1.500"/><rect x="11" y="12.500" width="9" height="9" rx="1.500"/></svg><span class="mt-[2px]">Breakout Rooms</span></button>
    <button class="ml-[16px] flex w-[58px] flex-col items-center pt-[6px]"><svg class="h-[24px] w-6" viewBox="0 0 24 24"><circle cx="12" cy="12.500" r="9" fill="#a6a6a6"/><circle cx="20" cy="4" r="5" fill="#1a1a1a"/><path d="M20 .5v7M16.500 4h7" stroke="#a6a6a6" stroke-width="1.500"/><circle cx="9" cy="10.500" r="1.200" fill="#1a1a1a"/><circle cx="15" cy="10.500" r="1.200" fill="#1a1a1a"/><path d="M7.500 14a4.800 4.800 0 0 0 9 0" fill="none" stroke="#1a1a1a" stroke-width="1.400"/></svg><span class="mt-[2px]">Reactions</span></button>
    <button class="ml-[33px] flex w-9 flex-col items-center pt-[6px]"><svg class="h-[24px] w-[18px]" viewBox="0 0 18 24" fill="none" stroke="#a6a6a6" stroke-width="1.600"><path d="M1 11V7q0-3 3-3h4M17 12v4q0 3-3 3h-4"/><circle cx="14.500" cy="6" r="2.200"/><circle cx="3.500" cy="17" r="2.200"/></svg><span class="mt-[2px]">Apps</span></button>
    <button class="ml-[35px] flex w-[74px] flex-col items-center pt-[6px]"><svg class="h-[24px] w-5" viewBox="0 0 20 24"><rect x=".8" y="2.500" width="18.400" height="14" rx="2.500" fill="none" stroke="#a6a6a6" stroke-width="1.500"/><path d="M6 14h14v6H6z" fill="#1a1a1a"/><rect x="8" y="14.500" width="11.500" height="4" rx="2" fill="#a6a6a6"/></svg><span class="mt-[2px]">Whiteboards</span></button>
  </div>
  <div class="flex items-center pr-3"><button class="h-[27px] w-[92px] rounded-lg bg-[#0e5fcb] font-bold text-white">Leave Room</button></div>
</div>

<script>
  // Ruler: one unit is 33.9 px, zero sits at x = 138
  const ns = 'http://www.w3.org/2000/svg', ruler = document.getElementById('ruler');
  const add = (tag, attrs, text) => {
    const e = document.createElementNS(ns, tag);
    for (const k in attrs) e.setAttribute(k, attrs[k]);
    if (text !== undefined) e.textContent = text;
    ruler.appendChild(e);
  };
  for (let i = -4; i <= 17; i++) {
    const x = 138 + i * 33.9;
    if (i) add('text', { x: Math.max(x, 3), y: 12 }, Math.abs(i));
    for (const f of [0.25, 0.75]) if (x + f * 33.9 < 732) add('rect', { x: x + f * 33.9, y: 8, width: 1, height: 1 });
    add('rect', { x: x + 17, y: 7, width: 1, height: 4 });
  }
  add('path', { d: 'M135.500 .5h6v2.500l-3 4 3 4v2.500h-6V11l3-4-3-4zM135.500 14.500h6v4h-6z', fill: '#fff', stroke: '#888' });
  add('path', { d: 'M629.500 15.500v-3l3.500-4 3.500 4v3z', fill: '#fff', stroke: '#888' });

  // Document text: {braces} are italic, _word_ carries a spelling mark
  const fmt = s => s
    .replace(/_([^_]+)_/g, '<u class="decoration-[#e23a4e] decoration-wavy decoration-1 underline-offset-1">$1</u>')
    .replace(/\{/g, '<em>').replace(/\}/g, '</em>');
  document.querySelector('article h3 span:last-child').innerHTML = fmt('Fungsi _Learning_ _Management_ System (LMS)');
  const paras = [
    ['Fungsi {_Learning_ _Management_ System} (LMS) adalah sistem', 'manajemen pembelajaran yang menyediakan cara bagi instruktur', 'untuk membuat dan menyampaikan konten, memantau partisipasi', 'siswa, dan menilai kinerja siswa. {_Learning_ _Management_ System}', 'juga berfungsi untuk memberi siswa kemampuan untuk', 'menggunakan fitur interaktif seperti diskusi berulir, konferensi', '_vidio_, dan forum diskusi.'],
    ['{_Learning_ _Management_ System} dapat membantu meningkatkan', 'metode pendidikan _tradisioanl_, menghemat waktu dan biaya.', 'Terutama di saat pandemi seperti sekarang yang mungkin', 'menghambat kesempatan belajar tatap muka. Sistem yang efektif', 'akan membantu instruktur dan administrator untuk mengelola', 'fungsi administrasi secara lebih efisien seperti pendaftaran', 'pengguna, konten, kalender, akses pengguna, komunikasi,', 'sertifikasi, dan pemberitahuan.'],
    ['{_Learning_ _Management_ System} digunakan oleh bisnis, institusi', 'juga lembaga seperti lembaga pemerintah nasioanal, pemerintah', 'daerah, dan lembaga pendidikan lain dalam sistem _berbasis_']
  ];
  document.getElementById('text').innerHTML = paras.map((p, n) =>
    '<p class="mb-2 text-justify">' + p.map((l, i) =>
      '<span class="block whitespace-nowrap ' + (i === p.length - 1 && n < 2 ? 'text-left' : '[text-align-last:justify]') + '">' + fmt(l) + '</span>').join('') + '</p>').join('');
</script>
</body>
</html>
